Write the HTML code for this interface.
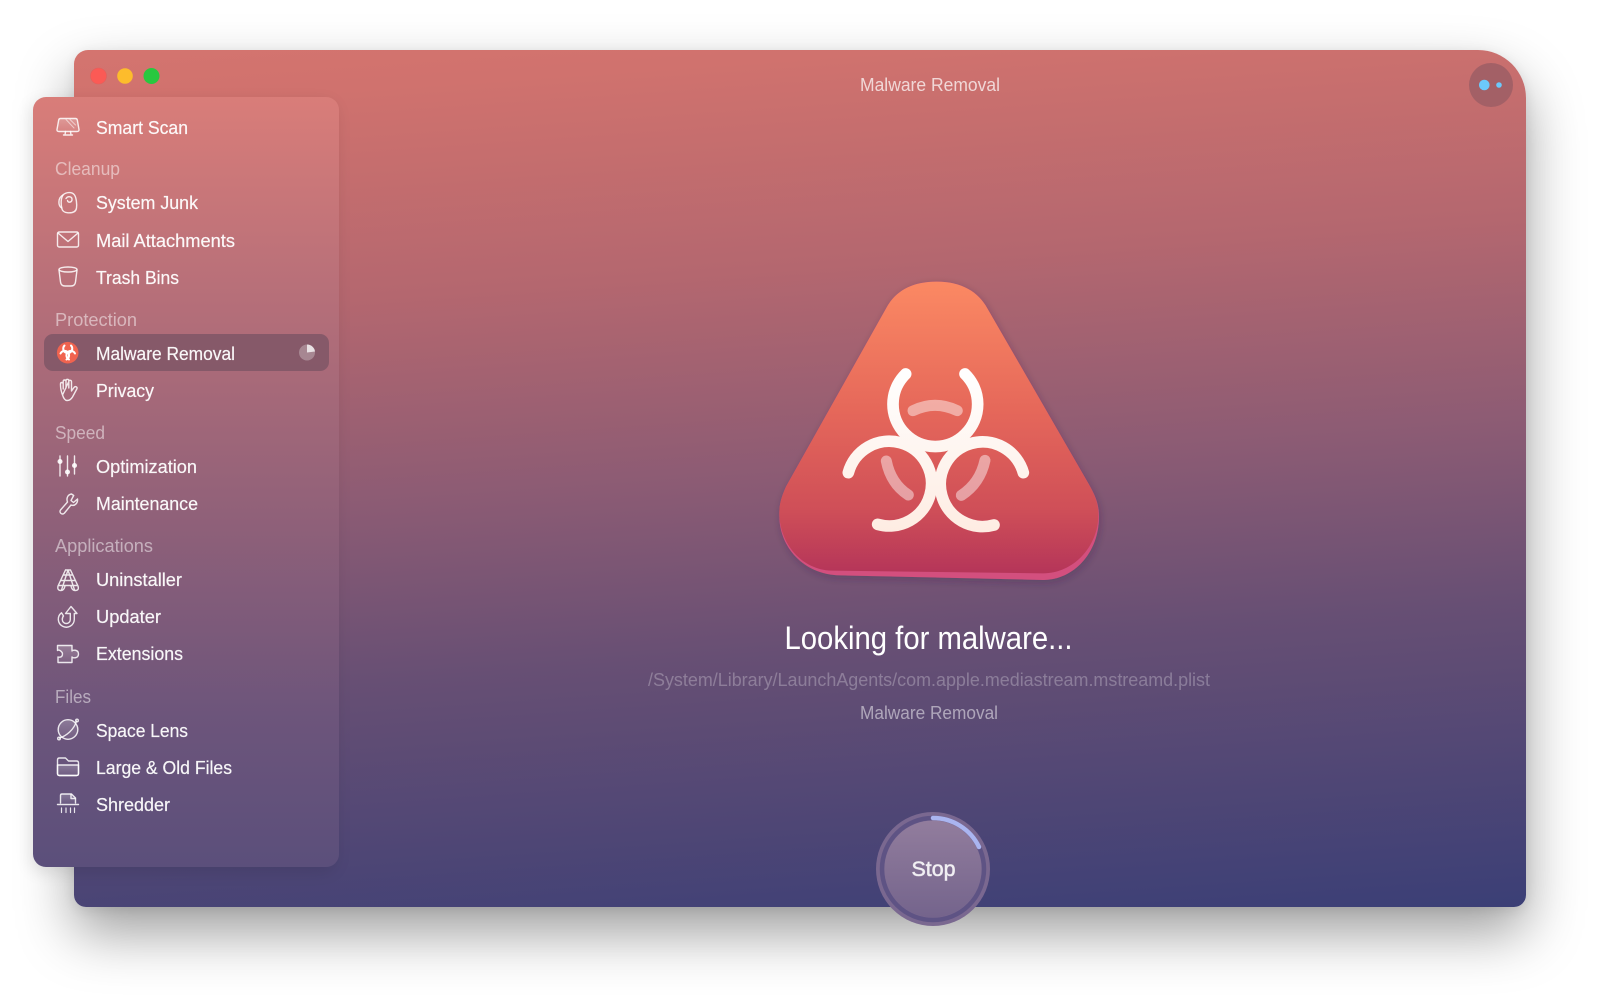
<!DOCTYPE html>
<html><head><meta charset="utf-8">
<style>
html,body{margin:0;padding:0;background:#fff;width:1600px;height:1006px;overflow:hidden}
#win{position:absolute;left:74px;top:50px;width:1452px;height:857px;border-radius:14px 48px 12px 12px;box-shadow:0 26px 56px rgba(0,0,0,.38),0 3px 12px rgba(0,0,0,.08);background:linear-gradient(176deg,#d4746f 0%,#d0726e 6%,#b4676f 28%,#8b5b74 50%,#674f74 68%,#3b3f76 100%)}
#side{position:absolute;left:33px;top:97px;width:306px;height:770px;border-radius:13px;box-shadow:-3px 5px 16px rgba(0,0,0,.10);background:linear-gradient(180deg,#d97d79 0%,#b66f79 26%,#8e6079 56%,#6d557b 80%,#5b4f7b 100%)}
svg{position:absolute;left:0;top:0}
text{font-family:"Liberation Sans",sans-serif}
.i{font-size:18px;fill:#fff;fill-opacity:.95;stroke:#fff;stroke-width:.25;stroke-opacity:.7}
.h{font-size:18px;fill:#fff;fill-opacity:.5}
.k{fill:none;stroke:#fff;stroke-opacity:.85;stroke-width:1.4;stroke-linecap:round;stroke-linejoin:round}
</style></head><body>
<div id="win"></div>
<div id="side"></div>
<svg width="1600" height="1006" viewBox="0 0 1600 1006" xmlns="http://www.w3.org/2000/svg">
<defs>
<linearGradient id="face" x1="0" y1="0" x2="0" y2="1">
<stop offset="0" stop-color="#fb8963"/><stop offset=".45" stop-color="#e5675a"/><stop offset=".78" stop-color="#cf4f58"/><stop offset="1" stop-color="#b53559"/>
</linearGradient>
<linearGradient id="btn" x1="0" y1="0" x2="0" y2="1">
<stop offset="0" stop-color="#927d9d"/><stop offset="1" stop-color="#74648c"/>
</linearGradient>
<linearGradient id="bio" gradientUnits="userSpaceOnUse" x1="0" y1="290" x2="0" y2="790">
<stop offset="0" stop-color="#fff"/><stop offset="1" stop-color="#feece2"/>
</linearGradient>
<linearGradient id="tint" x1="0" y1="0" x2="0" y2="1">
<stop offset="0" stop-color="#fff" stop-opacity=".22"/><stop offset="1" stop-color="#fff" stop-opacity=".06"/>
</linearGradient>
<filter id="fs" x="-30%" y="-30%" width="160%" height="160%"><feDropShadow dx="4" dy="8" stdDeviation="12" flood-color="#2a1a40" flood-opacity=".28"/></filter>
</defs>

<!-- traffic lights -->
<circle cx="98.5" cy="76" r="8" fill="#fb5a55" stroke="#e0605c" stroke-width=".6"/>
<circle cx="125" cy="76" r="7.8" fill="#fdbc2c"/>
<circle cx="151.5" cy="76" r="8" fill="#28c83f"/>

<text x="930" y="91" text-anchor="middle" textLength="140" lengthAdjust="spacingAndGlyphs" fill="#fff" fill-opacity=".72" style="font-size:18px">Malware Removal</text>

<!-- avatar -->
<circle cx="1491" cy="85" r="22" fill="#a36066"/>
<circle cx="1484.3" cy="85" r="5.3" fill="#6cc9fb"/>
<circle cx="1499" cy="85" r="2.8" fill="#6cc9fb"/>

<!-- selected row -->
<rect x="44" y="334" width="285" height="37" rx="9" fill="#7f5666" fill-opacity=".85"/>

<!-- sidebar labels -->
<text class="i" x="96" y="134" textLength="92" lengthAdjust="spacingAndGlyphs">Smart Scan</text>
<text class="h" x="55" y="175" textLength="65" lengthAdjust="spacingAndGlyphs">Cleanup</text>
<text class="i" x="96" y="209" textLength="102" lengthAdjust="spacingAndGlyphs">System Junk</text>
<text class="i" x="96" y="247" textLength="139" lengthAdjust="spacingAndGlyphs">Mail Attachments</text>
<text class="i" x="96" y="284" textLength="83" lengthAdjust="spacingAndGlyphs">Trash Bins</text>
<text class="h" x="55" y="326" textLength="82" lengthAdjust="spacingAndGlyphs">Protection</text>
<text class="i" x="96" y="360" textLength="139" lengthAdjust="spacingAndGlyphs">Malware Removal</text>
<text class="i" x="96" y="397" textLength="58" lengthAdjust="spacingAndGlyphs">Privacy</text>
<text class="h" x="55" y="439" textLength="50" lengthAdjust="spacingAndGlyphs">Speed</text>
<text class="i" x="96" y="473" textLength="101" lengthAdjust="spacingAndGlyphs">Optimization</text>
<text class="i" x="96" y="510" textLength="102" lengthAdjust="spacingAndGlyphs">Maintenance</text>
<text class="h" x="55" y="552" textLength="98" lengthAdjust="spacingAndGlyphs">Applications</text>
<text class="i" x="96" y="586" textLength="86" lengthAdjust="spacingAndGlyphs">Uninstaller</text>
<text class="i" x="96" y="623" textLength="65" lengthAdjust="spacingAndGlyphs">Updater</text>
<text class="i" x="96" y="660" textLength="87" lengthAdjust="spacingAndGlyphs">Extensions</text>
<text class="h" x="55" y="703" textLength="36" lengthAdjust="spacingAndGlyphs">Files</text>
<text class="i" x="96" y="737" textLength="92" lengthAdjust="spacingAndGlyphs">Space Lens</text>
<text class="i" x="96" y="774" textLength="136" lengthAdjust="spacingAndGlyphs">Large &amp; Old Files</text>
<text class="i" x="96" y="811" textLength="74" lengthAdjust="spacingAndGlyphs">Shredder</text>

<!-- Smart scan icon -->
<g class="k">
<path d="M60.5,118.500 H75.500 Q77,118.500 77.300,120 L79,129.500 Q79.200,131.500 77,131.500 H59 Q56.800,131.500 57,129.500 L58.700,120 Q59,118.500 60.500,118.500Z" fill="url(#tint)"/>
<path d="M63.500,135 H72.500 M65.500,131.500 L65,135 M70.500,131.500 L71,135"/>
<path d="M66,119.500 L74,128 M70,119.500 L75.500,125" stroke-opacity=".55" stroke-width="1"/>
</g>
<!-- System junk -->
<g class="k">
<path d="M63,195 C66,192 72,191.500 74.500,195 C76.500,198 77,205 76.500,208 C76,212 72,213 68,212.800 C64,212.600 62,210.500 61.800,208 C58,206 57.500,198 63,195Z"/>
<path d="M63,195 C60.500,199 61,205 61.800,208"/>
<path d="M66,198.500 C68,195.500 72.500,196.500 72,200 C71.600,202.500 68,203 67.500,200.500"/>
</g>
<!-- Mail -->
<g class="k"><rect x="57.500" y="232" width="21" height="15" rx="1.800"/><path d="M58,233 L68,241.500 L78,233"/></g>
<!-- Trash -->
<g class="k"><ellipse cx="68" cy="269.500" rx="9" ry="2.500"/><path d="M59,270 L60.500,282 Q61,286 65,286 H71 Q75,286 75.500,282 L77,270"/></g>
<!-- Malware icon -->
<circle cx="67.700" cy="352.700" r="10.800" fill="#f0634f"/>
<g fill="none" stroke="#fff" stroke-width="2" stroke-linecap="round">
<path d="M64.500,345.500 A4.500,4.500 0 1 0 71,345.500"/>
<path d="M60.500,353.500 A4.500,4.500 0 1 1 66.500,359.500"/>
<path d="M75,353.500 A4.500,4.500 0 1 0 69,359.500"/>
</g>
<!-- pie -->
<circle cx="307" cy="352.500" r="8" fill="#fff" fill-opacity=".28"/>
<path d="M307,352.500 V344.500 A8,8 0 0 1 315,351.500 Z" fill="#fff" fill-opacity=".75"/>
<!-- Privacy hand -->
<g class="k"><path d="M62.500,395 C61,391 60.500,388 60.500,385 V384 C60.500,382 63.200,382 63.200,384 V389 M63.200,385 V381.500 C63.200,379.500 66,379.500 66,381.500 V388 M66,381.500 V380.800 C66,378.800 68.800,378.800 68.800,380.800 V388 M68.800,381.500 C68.800,379.800 71.500,379.800 71.500,381.800 V391 L74,387.500 C75.500,385.700 77.800,387.200 76.800,389 L72.500,397 C71,399.500 69,400.500 67,400.500 C65,400.500 63.500,398 62.500,395Z"/></g>
<!-- Optimization -->
<g class="k" stroke-width="1.500"><path d="M60,456 V476 M67.500,456 V476 M74.500,456 V474"/></g>
<g fill="#fff" fill-opacity=".9"><circle cx="60" cy="461.500" r="2.500"/><circle cx="67.500" cy="472" r="2.500"/><circle cx="74.500" cy="465.500" r="2.500"/></g>
<!-- Maintenance wrench -->
<g class="k"><path d="M71.500,494 C68,494.500 66,498 67.500,502 L60.500,510 C58.800,512.500 62,515.500 64.500,513 L71,505 C74.800,506.500 78,503 77.500,499 L73.500,502.500 L71,500.500 L73.700,495.500 Z"/></g>
<!-- Uninstaller -->
<g class="k" stroke-width="1.300">
<path d="M65.500,570 H70.500 L78,586 M65.500,570 L58,586 M63.500,575 H72.500 M61,580.500 H75 M58.500,585.500 H77.500 M68,570 L61.500,590 M68,570 L74.500,590 M61,590.500 Q57,590.500 58,586 M75,590.500 Q79.500,590.500 78,586 M61,590.500 Q64,590.500 65,586 M75,590.500 Q72,590.500 71,586"/>
</g>
<!-- Updater -->
<g class="k"><path d="M71,606.500 L77,613.500 H74.300 V619.500 A8,8 0 1 1 61.500,612.800 L63.500,616 C62.500,617 62.300,618 62.300,619.500 A4,4 0 0 0 70.300,619.500 V613.500 H65.500 Z"/></g>
<!-- Extensions -->
<g class="k"><path d="M57.500,645.500 H72 V651 C72,650 78.500,649 78.500,654 C78.500,659 72,658 72,657 V662.500 H58 V657 C63,658 64,653 60,650.500 C59,650 58,650 57.500,650.500 Z" fill="url(#tint)"/></g>
<!-- Space Lens -->
<g class="k"><circle cx="68" cy="729.500" r="9.800" fill="url(#tint)"/><path d="M59.500,738 C66,736 74,730 76.500,721"/><circle cx="77" cy="720.500" r="1.300"/><circle cx="59" cy="738.500" r="1.300"/></g>
<!-- Folder -->
<g class="k"><path d="M57.500,760 Q57.500,758 59.500,758 H65.500 L68.500,761 H76.500 Q78.500,761 78.500,763 V773.500 Q78.500,775.500 76.500,775.500 H59.500 Q57.500,775.500 57.500,773.500 Z"/><path d="M57.500,765 H78.500 V773.500 Q78.500,775.500 76.500,775.500 H59.500 Q57.500,775.500 57.500,773.500 Z" fill="url(#tint)"/></g>
<!-- Shredder -->
<g class="k"><path d="M60.500,803 V795.500 Q60.500,794 62,794 H71.500 L75.500,798 V803" fill="url(#tint)"/><path d="M71,794.500 V798.500 H75" /><path d="M57.500,804.500 H78.500"/><path d="M61.500,808 V812.500 M66,808 V812.500 M70.500,808 V812.500 M74.500,808 V812.500" stroke-width="1.200"/></g>

<!-- Big icon -->
<g transform="translate(760,270) scale(.33333)">
<g filter="url(#fs)">
<path d="M380,112 C407,64 455,35 530,35 C605,35 655,66 682,115 L985,640 C1005,675 1017,700 1017,740 C1017,850 940,930 850,930 L240,916 C130,914 58,830 58,738 C58,700 65,680 78,650 Z" fill="#d3507e"/>
</g>
<path d="M380,112 C407,64 455,35 530,35 C605,35 655,66 682,115 L985,640 C1005,675 1015,700 1015,735 C1015,830 940,910 850,910 L215,902 C125,900 58,820 58,728 C58,700 65,680 78,650 Z" fill="url(#face)"/>
<g fill="none" stroke="#fff" stroke-opacity=".45" stroke-width="33" stroke-linecap="round">
<path d="M459,422 Q525,390 592,422"/>
<path d="M379,573 Q392,640 445,675"/>
<path d="M675,571 Q660,640 604,676"/>
</g>
<g fill="none" stroke="url(#bio)" stroke-width="35" stroke-linecap="round">
<path d="M437,312 A127,127 0 1 0 615,312"/>
<path d="M265,608 A127,127 0 1 1 353,763"/>
<path d="M790,608 A127,127 0 1 0 702,765"/>
</g>
</g>

<!-- Center text -->
<text x="928.500" y="649" text-anchor="middle" textLength="288" lengthAdjust="spacingAndGlyphs" fill="#fff" style="font-size:32px">Looking for malware...</text>
<text x="929" y="686" text-anchor="middle" textLength="562" lengthAdjust="spacingAndGlyphs" fill="#fff" fill-opacity=".27" style="font-size:18px">/System/Library/LaunchAgents/com.apple.mediastream.mstreamd.plist</text>
<text x="929" y="719" text-anchor="middle" textLength="138" lengthAdjust="spacingAndGlyphs" fill="#fff" fill-opacity=".5" style="font-size:18px">Malware Removal</text>

<!-- Stop -->
<circle cx="933" cy="869" r="57" fill="#7a6890"/>
<circle cx="933" cy="869" r="51" fill="none" stroke="#5e5384" stroke-width="4.500"/>
<circle cx="933" cy="869" r="48.500" fill="url(#btn)"/>
<path d="M933,818 A51,51 0 0 1 979,847" fill="none" stroke="#aab5f0" stroke-width="4.500" stroke-linecap="round"/>
<text x="933.500" y="876" text-anchor="middle" textLength="44" lengthAdjust="spacingAndGlyphs" fill="#fff" fill-opacity=".88" stroke="#fff" stroke-opacity=".6" stroke-width=".7" style="font-size:21px">Stop</text>
</svg>
</body></html>
